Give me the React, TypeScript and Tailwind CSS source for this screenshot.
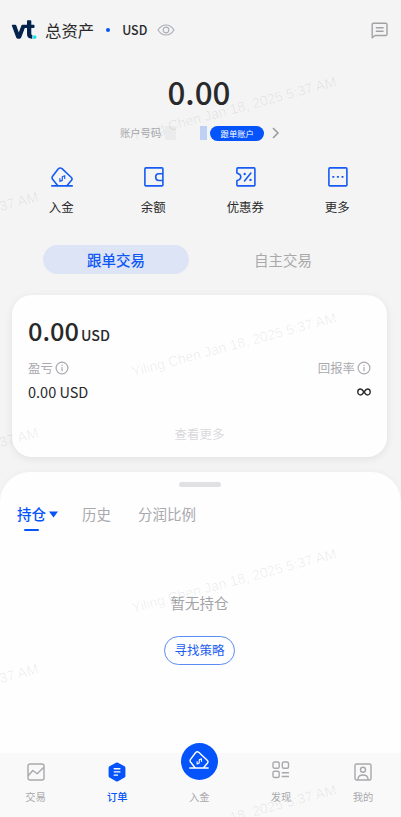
import type { ReactNode } from "react";

function DepositIcon({ className }: { className?: string }) {
  return (
    <svg viewBox="0 0 22 20" fill="none" stroke="currentColor" strokeWidth="1.6" strokeLinecap="round" strokeLinejoin="round" className={className}>
      <path d="M6.400 18.300 1.600 12.200Q.5 10.700 1.600 9.300L7.100 2Q8.900.1 11 1.700L20.400 10.500Q21.600 11.900 20.500 13.300L16.300 18.300" />
      <path d="M.8 18.900H21.200" />
      <path d="M13.800 8.700 11.300 9.700V13.400L8.800 14.400M8.900 11.700V13.600M13.700 9.600V11.500" strokeWidth="1.200" />
    </svg>
  );
}

function WalletIcon() {
  return (
    <svg viewBox="0 0 20 20" fill="none" stroke="currentColor" strokeWidth="1.6" className="size-5">
      <rect x=".9" y=".9" width="18" height="18" rx="1" />
      <path d="M19 6.700h-4.200a3.100 3.400 0 0 0 0 6.800H19" />
    </svg>
  );
}

function CouponIcon() {
  return (
    <svg viewBox="0 0 20 20" fill="none" stroke="currentColor" strokeWidth="1.6" strokeLinejoin="round" className="size-5">
      <path d="M.9 1.900Q.9.900 1.900.900H18Q18.900.900 18.900 1.900V18Q18.900 18.900 18 18.900H1.900Q.9 18.900.9 18V13.800L3.400 12.600Q6.200 9.900 3.400 7.200L.9 6Z" />
      <path d="m14.900 6-6.400 8" strokeLinecap="round" />
      <circle cx="8.700" cy="7" r="1.200" fill="currentColor" stroke="none" />
      <circle cx="14.500" cy="12.900" r="1.200" fill="currentColor" stroke="none" />
    </svg>
  );
}

function MoreIcon() {
  return (
    <svg viewBox="0 0 20 20" fill="none" stroke="currentColor" strokeWidth="1.6" className="size-5">
      <rect x=".9" y=".9" width="18" height="18" rx="1" />
      <path d="M4.300 9.900h2M8.900 9.900h2M13.500 9.900h2" strokeWidth="1.900" />
    </svg>
  );
}

function InfoIcon() {
  return (
    <svg viewBox="0 0 14 14" fill="none" stroke="currentColor" className="size-[14px]">
      <circle cx="7" cy="7" r="5.900" strokeWidth="1.200" />
      <path d="M7 6v4.300M7 3.700v1.200" strokeWidth="1.200" />
    </svg>
  );
}

const actions = [
  { label: "入金", icon: <DepositIcon className="h-5 w-[22px]" /> },
  { label: "余额", icon: <WalletIcon /> },
  { label: "优惠券", icon: <CouponIcon /> },
  { label: "更多", icon: <MoreIcon /> },
];

const navItems: { label: string; icon: ReactNode; active?: boolean }[] = [
  {
    label: "交易",
    icon: (
      <svg viewBox="0 0 18 18" fill="none" stroke="currentColor" strokeWidth="1.400" strokeLinejoin="round" className="size-[18px]">
        <rect x="1" y="1" width="16" height="16" rx="2" />
        <path d="m1.200 12.800 4.600-5.300 4.400 3.300 6.600-6.500" />
      </svg>
    ),
  },
  {
    label: "订单",
    active: true,
    icon: (
      <svg viewBox="0 0 18 20" className="h-5 w-[18px]">
        <path d="M8 .8Q9 .3 10 .8L16.500 4.300Q17.400 4.800 17.400 5.900V14Q17.400 15.100 16.500 15.600L10 19.200Q9 19.700 8 19.200L1.500 15.600Q.6 15.100.6 14V5.900Q.6 4.800 1.500 4.300Z" fill="#0453fb" />
        <path d="M5.700 6.700h6.700M5.700 9.900h6.700M5.700 13.100h4.300" stroke="white" strokeWidth="1.400" />
      </svg>
    ),
  },
  {
    label: "入金",
    icon: (
      <span className="mb-[21px] flex size-[37px] shrink-0 items-center justify-center rounded-full bg-[#0453fb] text-white">
        <DepositIcon className="mb-[3px] h-[18px] w-5" />
      </span>
    ),
  },
  {
    label: "发现",
    icon: (
      <svg viewBox="0 0 18 18" fill="none" stroke="currentColor" strokeWidth="1.400" className="mb-1 size-[18px]">
        <rect x="1" y="1" width="6.200" height="6.200" rx="1.500" />
        <rect x="10.300" y="1" width="6.200" height="6.200" rx="1.500" />
        <rect x="1" y="10.300" width="6.200" height="6.200" rx="1.500" />
        <path d="M9.700 11.800h7.300M9.700 15.500h7.300" />
      </svg>
    ),
  },
  {
    label: "我的",
    icon: (
      <svg viewBox="0 0 18 18" fill="none" stroke="currentColor" strokeWidth="1.400" className="size-[18px]">
        <rect x="1" y="1" width="16" height="16" rx="1.500" />
        <circle cx="9" cy="6.800" r="2.500" />
        <path d="M4 17v-1.200Q4.500 12 9 12t5 3.800V17" />
      </svg>
    ),
  },
];

function Header() {
  return (
    <header className="flex h-[60px] items-center pr-[13px] pl-[11px]">
      <svg viewBox="0 0 26 20" className="h-5 w-[26px]">
        <path d="M.8 5.500Q.6 4.700 1.500 4.700H4.300Q5 4.700 5.300 5.400L7.800 12.600 10.500 5.300Q10.800 4.700 11.500 4.700H16V1Q16 .2 16.800.2H19.500Q20.300.2 20.300 1V4.700H22.700Q23.500 4.700 23.500 5.500V7.300Q23.500 8.100 22.700 8.100H20.300V13.700Q20.300 15.100 21.600 15.400 20.700 17 21.500 18.600 16 19 16 14V8.100H13.800L10.200 17.600Q9.700 18.700 8.700 18.700H6.600Q5.600 18.700 5.200 17.600Z" fill="#04234c" />
        <circle cx="23.600" cy="17.100" r="1.900" fill="#14e5ef" />
      </svg>
      <h1 className="ml-[8px] text-[16.4px]">总资产</h1>
      <span className="ml-[12px] size-1 rounded-full bg-[#0453fb]" />
      <span className="ml-[12px] text-[12.4px] font-medium">USD</span>
      <svg viewBox="0 0 18 12" fill="none" stroke="#adb0b7" strokeWidth="1.200" className="ml-[10px] h-3 w-[18px]">
        <path d="M1 6Q4.200 1 9 1t8 5q-3.200 5-8 5T1 6Z" />
        <circle cx="9" cy="6" r="2.800" />
      </svg>
      <svg viewBox="0 0 17 17" fill="none" stroke="#a2a2a6" strokeWidth="1.400" strokeLinejoin="round" className="ml-auto size-[17px]">
        <path d="M1.200 15.700V2.500Q1.200 1.200 2.500 1.200h12.200Q16 1.200 16 2.500v9.700q0 1.300-1.300 1.300H4Z" />
        <path d="M4.800 5.800h7.800M4.800 9.200h7.800" />
      </svg>
    </header>
  );
}

function AssetCard() {
  return (
    <section className="mx-3 mt-[21px] h-[162px] w-[375px] rounded-[20px] bg-[#fefefe] px-4 shadow-[0_2px_8px_rgba(0,0,0,0.08)]">
      <div className="flex h-[61px] items-baseline pt-[15px] font-medium">
        <span className="text-[25.4px] leading-10">0.00</span>
        <span className="ml-[2px] text-[14.3px]">USD</span>
      </div>
      <div className="flex h-6 items-center justify-between text-[12.4px] text-[#a9a9ae]">
        <span className="flex items-center gap-[2px]">盈亏 <InfoIcon /></span>
        <span className="flex items-center gap-[2px]">回报率 <InfoIcon /></span>
      </div>
      <div className="flex h-6 items-center justify-between text-[14.500px]">
        <span>0.00 USD</span>
        <svg viewBox="0 0 14 8" fill="none" stroke="#2b2b2e" strokeWidth="1.400" className="h-2 w-[14px]">
          <path d="M7 4C5.500 1.800 4.800 1 3.500 1a2.700 3 0 0 0 0 6C4.800 7 5.500 6.200 7 4s2.200-3 3.500-3a2.700 3 0 0 1 0 6C9.200 7 8.500 6.200 7 4Z" />
        </svg>
      </div>
      <p className="mt-[18px] text-center text-[12.5px] leading-6 text-[#d9d9dc]">查看更多</p>
    </section>
  );
}

function Positions() {
  return (
    <section className="mt-[15px] flex h-[281px] flex-col items-center rounded-t-[30px] bg-[#fefefe] pr-[2px] shadow-[0_-1px_6px_rgba(0,0,0,0.03)]">
      <div className="mt-[10px] h-[5px] w-[42px] rounded-full bg-[#e1e1e4]" />
      <div className="mt-[16px] flex h-[28px] w-full shrink-0 pl-[17px] text-[14.5px] leading-[22px] text-[#a9a9ae]">
        <div className="w-[65px] text-[#0453fb]">
          <div className="flex items-center gap-[3px] font-medium">
            持仓
            <svg viewBox="0 0 9 7" className="h-[7px] w-[9px]"><path d="M0 .5h9L4.500 6.500Z" fill="currentColor" /></svg>
          </div>
          <div className="mt-[4px] ml-[7px] h-[2px] w-[15px] rounded-full bg-[#0453fb]" />
        </div>
        <span className="w-[56px]">历史</span>
        <span>分润比例</span>
      </div>
      <p className="mt-[60px] text-[14.5px] leading-6 text-[#a3a3a8]">暂无持仓</p>
      <button className="mt-[21px] h-[29px] w-[71px] rounded-full border border-[#5a8cf5] text-[12.5px] leading-none text-[#1b5df0]">寻找策略</button>
    </section>
  );
}

function BottomNav() {
  return (
    <nav className="flex h-16 justify-between bg-[#f9f9f9] pr-[18px] pl-[15.5px]">
      {navItems.map((item, i) => (
        <div key={i} className={item.active ? "flex w-10 flex-col items-center text-[#0453fb]" : "flex w-10 flex-col items-center text-[#a9a9ad]"}>
          <div className="flex h-[37px] shrink-0 items-center justify-center">{item.icon}</div>
          <span className={item.active ? "text-[10.3px] leading-[14px] font-medium" : "text-[10.3px] leading-[14px]"}>{item.label}</span>
        </div>
      ))}
    </nav>
  );
}

// centre points of the repeated account stamp
const stamps = [
  [234, 109], [234, 345], [234, 581], [234, 817],
  [-64, 224], [-64, 460], [-64, 696],
];

function Watermark() {
  return (
    <div className="pointer-events-none absolute inset-0 overflow-hidden font-['Liberation_Sans',sans-serif] text-[14px] text-black/7">
      {stamps.map(([x, y]) => (
        <span key={`${x}-${y}`} className="absolute -translate-x-1/2 -translate-y-1/2 -rotate-15 whitespace-nowrap" style={{ left: x, top: y }}>
          Yiling Chen Jan 18, 2025 5:37 AM
        </span>
      ))}
    </div>
  );
}

export default function App() {
  return (
    <div className="relative h-[817px] w-[401px] overflow-hidden bg-[#f4f4f4] font-['Noto_Sans_CJK_SC',sans-serif] text-[#29292b]">
      <Header />
      <div className="flex h-16 items-center justify-center pr-[3px] text-[31.400px] font-medium">0.00</div>
      <div className="flex h-[18px] items-center pl-[120px] text-[10.3px] text-[#a9a9ae]">
        <span>账户号码</span>
        <span className="ml-[4px] h-[14px] w-[11px] bg-[#ebebeb]" />
        <span className="ml-[24px] h-[14px] w-[7px] bg-[#bfd0f5]" />
        <span className="ml-[3px] flex h-[15px] w-[54px] items-center justify-center rounded-full bg-[#0453fb] text-[8.3px] leading-none text-white">跟单账户</span>
        <svg viewBox="0 0 7 12" fill="none" stroke="#98989c" strokeWidth="1.500" className="ml-[8px] h-3 w-[7px]">
          <path d="m1 1 5 5-5 5" />
        </svg>
      </div>
      <div className="mt-[25px] grid w-[398px] grid-cols-4 pr-[15px] pl-[15px]">
        {actions.map((action) => (
          <div key={action.label} className="flex flex-col items-center">
            <div className="ml-px text-[#165bf3]">{action.icon}</div>
            <span className="mt-[11px] ml-[0.5px] text-[12.4px] leading-[18px]">{action.label}</span>
          </div>
        ))}
      </div>
      <div className="mt-[29px] flex h-[29px] gap-[21px] pl-[43px] text-[14.5px]">
        <button className="w-[146px] rounded-full bg-[#dce4f5] font-medium text-[#0f58f5]">跟单交易</button>
        <button className="w-[146px] text-[#a9a9ab]">自主交易</button>
      </div>
      <AssetCard />
      <Positions />
      <BottomNav />
      <Watermark />
    </div>
  );
}
